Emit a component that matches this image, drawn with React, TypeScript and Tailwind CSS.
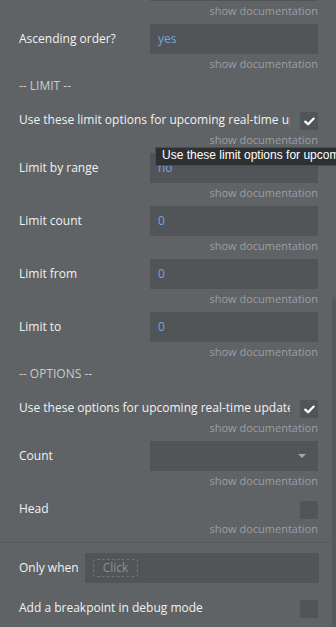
import React from "react";

const FONT = { fontFamily: '"Open Sans", "Noto Sans", sans-serif' };

function Doc() {
  return (
    <div className="mt-[3px] h-[14px] text-right text-[11px] leading-[14px] text-[#9b9fa2]">
      show documentation
    </div>
  );
}

function InputRow({ label, value, first }: { label: string; value?: string; first?: boolean }) {
  return (
    <div className={first ? "-mt-[29px] mb-[6px]" : "mb-[6px]"}>
      <div className="flex h-[30px] items-center">
        <div className="w-[131px] shrink-0 text-[12px] leading-[18px] text-[#f2f2f2]">{label}</div>
        <div className="flex h-[30px] flex-1 items-center bg-[#515558] pl-[8px] text-[12px] leading-[18px] text-[#72a6e0]">
          {value}
        </div>
      </div>
      <Doc />
    </div>
  );
}

function Check({ checked }: { checked?: boolean }) {
  return (
    <div className="flex h-[18px] w-[18px] shrink-0 items-center justify-center rounded-[2px] bg-[#515558]">
      {checked && (
        <svg width="11" height="9" viewBox="0 0 11 9">
          <path d="M1.3 4.6 L4.1 7.3 L9.7 1.6" fill="none" stroke="#ffffff" strokeWidth="2.2" strokeLinecap="round" strokeLinejoin="round" />
        </svg>
      )}
    </div>
  );
}

function CheckRow({ label, checked, extraTop }: { label: string; checked?: boolean; extraTop?: boolean }) {
  return (
    <div className={extraTop ? "mb-[6px] pt-[7px]" : "mb-[6px] pt-[6px]"}>
      <div className="flex h-[18px] items-start">
        <div className="w-[271px] shrink-0 overflow-hidden whitespace-nowrap text-[12px] leading-[15px] text-[#f2f2f2]">
          {label}
        </div>
        <div className="flex-1" />
        <Check checked={checked} />
      </div>
      <Doc />
    </div>
  );
}

function Heading({ text }: { text: string }) {
  return (
    <div className="mb-[13px] mt-[8px] h-[14px] text-[12px] leading-[14px] text-[#c9cbcd]">{text}</div>
  );
}

export default function App() {
  return (
    <div className="relative h-[627px] w-[336px] overflow-hidden bg-[#5f6366]" style={FONT}>
      <div className="pl-[19px] pr-[18px]">
        <InputRow label="" first />
        <InputRow label="Ascending order?" value="yes" />
        <Heading text="-- LIMIT --" />
        <CheckRow label="Use these limit options for upcoming real-time updates" checked />
        <InputRow label="Limit by range" value="no" />
        <InputRow label="Limit count" value="0" />
        <InputRow label="Limit from" value="0" />
        <InputRow label="Limit to" value="0" />
        <Heading text="-- OPTIONS --" />
        <CheckRow label="Use these options for upcoming real-time updates" checked />
        <div className="mb-[6px]">
          <div className="flex h-[30px] items-center">
            <div className="w-[131px] shrink-0 text-[12px] leading-[18px] text-[#f2f2f2]">Count</div>
            <div className="flex h-[30px] flex-1 items-center justify-end bg-[#515558] pr-[12px]">
              <svg width="8" height="4" viewBox="0 0 8 4">
                <path d="M0 0 H8 L4 4 Z" fill="#a4a7aa" />
              </svg>
            </div>
          </div>
          <Doc />
        </div>
        <CheckRow label="Head" extraTop />
      </div>
      <div className="border-t border-[#585b5e] pl-[19px] pr-[17px] pt-[10px]">
        <div className="flex h-[30px] items-center">
          <div className="w-[66px] shrink-0 text-[12px] leading-[18px] text-[#f2f2f2]">Only when</div>
          <div className="flex h-[30px] flex-1 items-center bg-[#515558] pl-[8px]">
            <div className="flex h-[18px] w-[45px] items-center justify-center rounded-[4px] border border-dashed border-[#6f7376] text-[12px] leading-[16px] text-[#8e9295]">
              Click
            </div>
          </div>
        </div>
        <div className="mt-[17px] flex h-[18px] items-start pr-[1px]">
          <div className="flex-1 whitespace-nowrap text-[12px] leading-[15px] text-[#f2f2f2]">
            Add a breakpoint in debug mode
          </div>
          <Check />
        </div>
      </div>
      <div
        className="absolute left-[155px] top-[147px] whitespace-nowrap border border-[#4a4d50] bg-[#2e3032] pb-[3px] pl-[6px] pr-[6px] text-[12px] leading-[14px] text-white"
        style={{ fontFamily: '"Liberation Sans", Arial, sans-serif' }}
      >
        Use these limit options for upcoming real-time updates
      </div>
      <div className="absolute bottom-0 right-0 top-[297px] w-[4px] bg-[#575a5d]" />
    </div>
  );
}
